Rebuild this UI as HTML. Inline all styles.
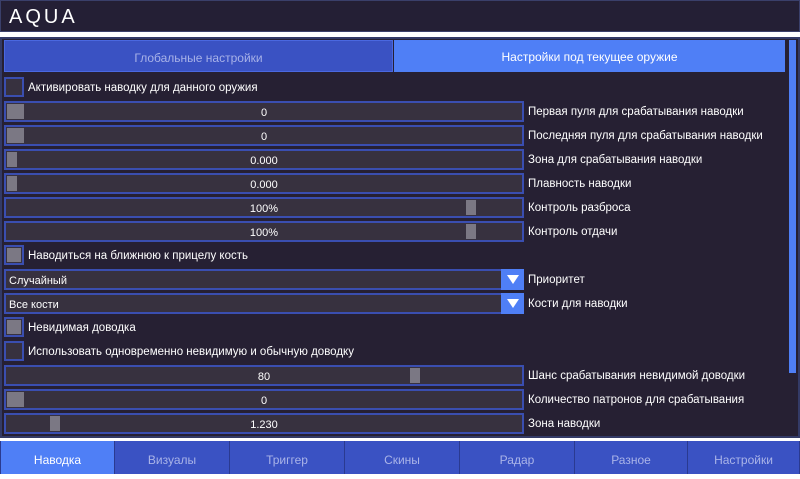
<!DOCTYPE html>
<html><head><meta charset="utf-8"><style>
*{margin:0;padding:0;box-sizing:border-box}
body{width:800px;height:474px;background:#fff;font-family:"Liberation Sans","DejaVu Sans",sans-serif;font-size:12px;color:#fff;position:relative;overflow:hidden}
.hdr{position:absolute;left:0;top:0;width:800px;height:32px;background:#241f35;border:1px solid #3a3f6a}
.logo{position:absolute;left:8px;top:5px;font-size:20px;letter-spacing:3px;font-weight:300}
.panel{position:absolute;left:0;top:37px;width:800px;height:401px;background:#262033;border:2px solid #333a66}
.tab{position:absolute;top:40px;height:32px;line-height:34px;text-align:center;font-size:12px}
.sl{position:absolute;left:4px;width:520px;height:21px;background:#37313f;border:2px solid #3a4eb0;text-align:center;line-height:20px;font-size:11px}
.th{position:absolute;top:1px;height:15px;background:#7b7884}
.lbl{position:absolute;left:528px;font-size:11.5px;line-height:24px}
.cb{position:absolute;left:4px;width:20px;height:20px;background:#37313f;border:2px solid #3a4eb0}
.cl{position:absolute;left:28px;font-size:11.5px;line-height:24px}
.cmb{position:absolute;left:4px;width:520px;height:21px;background:#37313f;border:2px solid #3a4eb0;font-size:11px;line-height:20px;padding-left:3px}
.arr{position:absolute;right:-2px;top:-2px;width:23px;height:21px;background:#4f7ff6}
.arr:after{content:"";position:absolute;left:6px;top:6px;border-left:6px solid transparent;border-right:6px solid transparent;border-top:9px solid #fff}
.bt{position:absolute;top:441px;height:33px;line-height:38px;text-align:center;background:#3a52c3;color:#aab4e8;border-left:1px solid #2a3a90;border-right:1px solid #2a3a90;font-size:12px}
</style></head><body>
<div class="hdr"><div class="logo">AQUA</div></div>
<div class="panel"></div>
<div class="tab" style="left:4px;width:389px;background:#3a52c3;border:1px solid #4a68e0;color:#a8b2e8">Глобальные настройки</div>
<div class="tab" style="left:394px;width:391px;background:#4f7ff6">Настройки под текущее оружие</div>
<div style="position:absolute;left:789px;top:40px;width:7px;height:333px;background:#4f7ff6"></div>

<div class="cb" style="top:77px"></div><div class="cl" style="top:76px">Активировать наводку для данного оружия</div>

<div class="sl" style="top:101px"><div class="th" style="left:1px;width:17px"></div>0</div><div class="lbl" style="top:100px">Первая пуля для срабатывания наводки</div>
<div class="sl" style="top:125px"><div class="th" style="left:1px;width:17px"></div>0</div><div class="lbl" style="top:124px">Последняя пуля для срабатывания наводки</div>
<div class="sl" style="top:149px"><div class="th" style="left:1px;width:10px"></div>0.000</div><div class="lbl" style="top:148px">Зона для срабатывания наводки</div>
<div class="sl" style="top:173px"><div class="th" style="left:1px;width:10px"></div>0.000</div><div class="lbl" style="top:172px">Плавность наводки</div>
<div class="sl" style="top:197px"><div class="th" style="left:460px;width:10px"></div>100%</div><div class="lbl" style="top:196px">Контроль разброса</div>
<div class="sl" style="top:221px"><div class="th" style="left:460px;width:10px"></div>100%</div><div class="lbl" style="top:220px">Контроль отдачи</div>

<div class="cb" style="top:245px"><div style="position:absolute;left:1px;top:1px;width:14px;height:14px;background:#7b7884"></div></div><div class="cl" style="top:244px">Наводиться на ближнюю к прицелу кость</div>

<div class="cmb" style="top:269px">Случайный<div class="arr"></div></div><div class="lbl" style="top:268px">Приоритет</div>
<div class="cmb" style="top:293px">Все кости<div class="arr"></div></div><div class="lbl" style="top:292px">Кости для наводки</div>

<div class="cb" style="top:317px"><div style="position:absolute;left:1px;top:1px;width:14px;height:14px;background:#7b7884"></div></div><div class="cl" style="top:316px">Невидимая доводка</div>
<div class="cb" style="top:341px"></div><div class="cl" style="top:340px">Использовать одновременно невидимую и обычную доводку</div>

<div class="sl" style="top:365px"><div class="th" style="left:404px;width:10px"></div>80</div><div class="lbl" style="top:364px">Шанс срабатывания невидимой доводки</div>
<div class="sl" style="top:389px"><div class="th" style="left:1px;width:17px"></div>0</div><div class="lbl" style="top:388px">Количество патронов для срабатывания</div>
<div class="sl" style="top:413px"><div class="th" style="left:44px;width:10px"></div>1.230</div><div class="lbl" style="top:412px">Зона наводки</div>

<div class="bt" style="left:0;width:115px;background:#4f7ff6;color:#fff">Наводка</div>
<div class="bt" style="left:114px;width:116px">Визуалы</div>
<div class="bt" style="left:229px;width:116px">Триггер</div>
<div class="bt" style="left:344px;width:116px">Скины</div>
<div class="bt" style="left:459px;width:116px">Радар</div>
<div class="bt" style="left:574px;width:114px">Разное</div>
<div class="bt" style="left:687px;width:113px">Настройки</div>
</body></html>
